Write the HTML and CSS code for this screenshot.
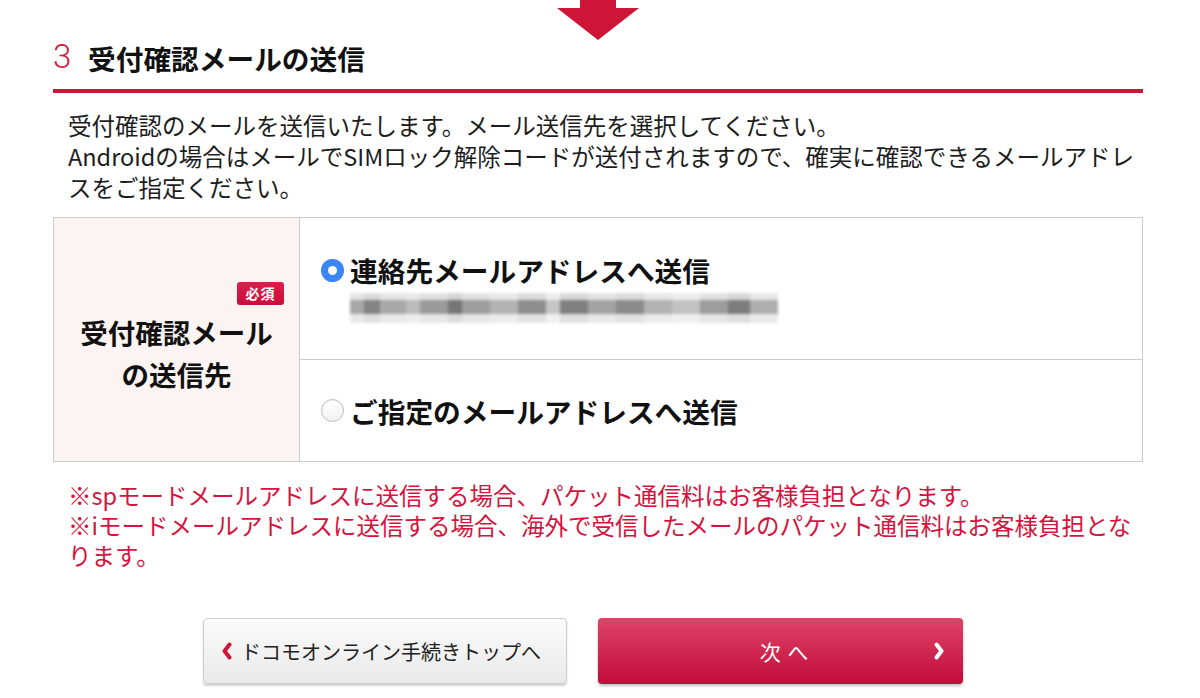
FILE: index.html
```html
<!DOCTYPE html>
<html lang="ja">
<head>
<meta charset="utf-8">
<title>受付確認メールの送信</title>
<link rel="stylesheet" href="styles.css">
</head>
<body>
<div class="page">
  <div class="arrow">
    <svg width="82" height="40" viewBox="0 0 82 40"><path d="M23 0H59V8H82L41 40L0 8H23Z" fill="#cf1537"/></svg>
  </div>
  <h2 class="heading"><span class="num">3</span><span class="title">受付確認メールの送信</span></h2>
  <p class="lead"><span class="ln">受付確認のメールを送信いたします。メール送信先を選択してください。</span><span class="ln">Androidの場合はメールでSIMロック解除コードが送付されますので、確実に確認できるメールアドレ</span><span class="ln">スをご指定ください。</span></p>

  <div class="table">
    <div class="th">
      <span class="badge">必須</span>
      <div class="th-label">受付確認メール<br>の送信先</div>
    </div>
    <div class="td">
      <div class="row row-first">
        <label class="opt"><span class="radio on"></span><span class="opt-text">連絡先メールアドレスへ送信</span></label>
        <div class="blurred"></div>
      </div>
      <div class="row row-second">
        <label class="opt"><span class="radio"></span><span class="opt-text">ご指定のメールアドレスへ送信</span></label>
      </div>
    </div>
  </div>

  <p class="notes"><span class="ln">※spモードメールアドレスに送信する場合、パケット通信料はお客様負担となります。</span><span class="ln">※iモードメールアドレスに送信する場合、海外で受信したメールのパケット通信料はお客様負担とな</span><span class="ln">ります。</span></p>

  <div class="buttons">
    <a class="btn btn-back"><svg class="chev" width="11" height="18" viewBox="0 0 11 18"><path d="M8.5 2.5L3.5 9L8.5 15.5" fill="none" stroke="#cf1537" stroke-width="4" stroke-linecap="round" stroke-linejoin="round"/></svg><span>ドコモオンライン手続きトップへ</span></a>
    <a class="btn btn-next"><span class="next-text">次 へ</span><svg class="chev-r" width="11" height="18" viewBox="0 0 11 18"><path d="M2.5 2.5L7.5 9L2.5 15.5" fill="none" stroke="#ffffff" stroke-width="4" stroke-linecap="round" stroke-linejoin="round"/></svg></a>
  </div>
</div>
</body>
</html>
```
FILE: styles.css
```css
* { box-sizing: border-box; }
html, body { margin: 0; padding: 0; background: #fff; }
body {
  font-family: "Noto Sans CJK JP", "Noto Sans", sans-serif;
  color: #1a1a1a;
  width: 1200px;
  height: 698px;
  overflow: hidden;
}
.page {
  margin-left: 53px;
  width: 1090px;
}
.arrow {
  display: flex;
  justify-content: center;
  height: 40px;
}
.arrow svg { display: block; }
.heading {
  margin: 0;
  display: flex;
  align-items: center;
  height: 53px;
  padding-bottom: 13px;
  border-bottom: 4px solid #cf1537;
  line-height: 36px;
}
.num {
  font-family: Roboto, "Liberation Sans", sans-serif;
  font-weight: 300;
  color: #d01a3f;
  font-size: 33px;
  width: 35px;
  margin-top: -2px;
}
.title {
  font-size: 27.7px;
  font-weight: bold;
  color: #111;
}
.lead {
  margin: 17px 0 0 15px;
  font-size: 23.5px;
  white-space: nowrap;
  color: #1d1d1d;
}
.ln {
  display: block;
  height: 31px;
  line-height: 31px;
}
.table {
  margin-top: 14px;
  display: flex;
  border: 1px solid #cccccc;
  height: 245px;
}
.th {
  width: 246px;
  flex: none;
  background: #fcf4f2;
  border-right: 1px solid #cccccc;
  display: flex;
  flex-direction: column;
  justify-content: center;
  align-items: center;
  padding-bottom: 2px;
}
.badge {
  align-self: flex-end;
  margin-right: 15px;
  width: 47px;
  height: 23px;
  border-radius: 3px;
  background: linear-gradient(#dc1f4c, #c80d3c);
  color: #fff;
  font-size: 14px;
  font-weight: bold;
  line-height: 23px;
  text-align: center;
  letter-spacing: 1px;
}
.th-label {
  margin-top: 6px;
  font-size: 27.5px;
  font-weight: bold;
  line-height: 42px;
  text-align: center;
  color: #111;
}
.td {
  flex: 1;
  display: flex;
  flex-direction: column;
}
.row { padding-left: 21px; }
.row-first {
  height: 142px;
  border-bottom: 1px solid #cccccc;
  padding-top: 34px;
}
.row-second {
  flex: 1;
  display: flex;
  align-items: center;
}
.opt {
  display: flex;
  align-items: center;
  height: 36px;
}
.radio {
  width: 23px;
  height: 23px;
  border-radius: 50%;
  border: 1px solid #bdbdbd;
  background: linear-gradient(#fff, #f2f2f2);
  box-shadow: inset 0 1px 1px rgba(0,0,0,.06);
  margin-right: 6px;
  flex: none;
}
.radio.on {
  border: none;
  background: #3b86f6;
  display: flex;
  align-items: center;
  justify-content: center;
}
.radio.on::after {
  content: "";
  width: 9px;
  height: 9px;
  border-radius: 50%;
  background: #fff;
}
.opt-text {
  font-size: 27.7px;
  font-weight: bold;
  color: #111;
  line-height: 36px;
}
.blurred {
  margin: 5px 0 0 29px;
  width: 428px;
  height: 30px;
  background:
    linear-gradient(to bottom, rgba(255,255,255,.7) 0 7px, rgba(255,255,255,0) 7px 21px, rgba(255,255,255,.75) 21px),
    linear-gradient(90deg, #999 0 14px, #6e6e6e 14px 30px, #9a9a9a 30px 56px, #b0b0b0 56px 70px, #8a8a8a 70px 98px, #5e5e5e 98px 112px, #8d8d8d 112px 140px, #a6a6a6 140px 168px, #7a7a7a 168px 196px, #bcbcbc 196px 210px, #6a6a6a 210px 238px, #939393 238px 266px, #777 266px 294px, #a5a5a5 294px 322px, #b8b8b8 322px 350px, #8c8c8c 350px 378px, #666 378px 400px, #a0a0a0 400px 428px);
  filter: blur(1.5px);
  opacity: .85;
}
.notes {
  margin: 18px 0 0 15px;
  font-size: 23.5px;
  color: #d4143e;
  white-space: nowrap;
}
.notes .ln {
  height: 30px;
  line-height: 30px;
}
.buttons {
  margin-top: 48px;
  padding-left: 150px;
  display: flex;
  gap: 31px;
}
.btn {
  display: flex;
  align-items: center;
  height: 66px;
  border-radius: 4px;
  text-decoration: none;
}
.btn-back {
  width: 364px;
  border: 1px solid #cfcfcf;
  background: linear-gradient(#fbfbfb, #e9e9e9);
  box-shadow: 0 2px 2px rgba(0,0,0,.18);
  padding-left: 17px;
  font-size: 20px;
  color: #222;
}
.chev { margin-right: 9px; flex: none; }
.btn-next {
  width: 365px;
  background: linear-gradient(#de4368, #c10c39);
  box-shadow: 0 2px 3px rgba(0,0,0,.25);
  color: #fff;
  position: relative;
  justify-content: center;
  font-size: 21px;
}
.next-text { letter-spacing: 1px; margin-left: 8px; }
.chev-r {
  position: absolute;
  right: 18px;
  top: 24px;
}
```
